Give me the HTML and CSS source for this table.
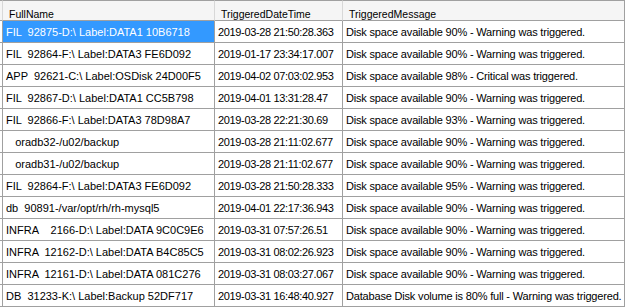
FILE: index.html
```html
<!DOCTYPE html>
<html>
<head>
<meta charset="utf-8">
<link rel="stylesheet" href="styles.css">
</head>
<body>
<div class="grid">
  <div class="row head">
    <div class="strip"></div>
    <div class="cell">FullName</div>
    <div class="cell">TriggeredDateTime</div>
    <div class="cell">TriggeredMessage</div>
  </div>
  <div class="row">
    <div class="strip"></div>
    <div class="cell name selected">FIL  92875-D:\ Label:DATA1 10B6718</div>
    <div class="cell date">2019-03-28 21:50:28.363</div>
    <div class="cell msg">Disk space available 90% - Warning was triggered.</div>
  </div>
  <div class="row">
    <div class="strip"></div>
    <div class="cell name">FIL  92864-F:\ Label:DATA3 FE6D092</div>
    <div class="cell date">2019-01-17 23:34:17.007</div>
    <div class="cell msg">Disk space available 90% - Warning was triggered.</div>
  </div>
  <div class="row">
    <div class="strip"></div>
    <div class="cell name">APP  92621-C:\ Label:OSDisk 24D00F5</div>
    <div class="cell date">2019-04-02 07:03:02.953</div>
    <div class="cell msg">Disk space available 98% - Critical was triggered.</div>
  </div>
  <div class="row">
    <div class="strip"></div>
    <div class="cell name">FIL  92867-D:\ Label:DATA1 CC5B798</div>
    <div class="cell date">2019-04-01 13:31:28.47</div>
    <div class="cell msg">Disk space available 90% - Warning was triggered.</div>
  </div>
  <div class="row">
    <div class="strip"></div>
    <div class="cell name">FIL  92866-F:\ Label:DATA3 78D98A7</div>
    <div class="cell date">2019-03-28 22:21:30.69</div>
    <div class="cell msg">Disk space available 93% - Warning was triggered.</div>
  </div>
  <div class="row">
    <div class="strip"></div>
    <div class="cell name">   oradb32-/u02/backup</div>
    <div class="cell date">2019-03-28 21:11:02.677</div>
    <div class="cell msg">Disk space available 90% - Warning was triggered.</div>
  </div>
  <div class="row">
    <div class="strip"></div>
    <div class="cell name">   oradb31-/u02/backup</div>
    <div class="cell date">2019-03-28 21:11:02.677</div>
    <div class="cell msg">Disk space available 90% - Warning was triggered.</div>
  </div>
  <div class="row">
    <div class="strip"></div>
    <div class="cell name">FIL  92864-F:\ Label:DATA3 FE6D092</div>
    <div class="cell date">2019-03-28 21:50:28.333</div>
    <div class="cell msg">Disk space available 95% - Warning was triggered.</div>
  </div>
  <div class="row">
    <div class="strip"></div>
    <div class="cell name">db  90891-/var/opt/rh/rh-mysql5</div>
    <div class="cell date">2019-04-01 22:17:36.943</div>
    <div class="cell msg">Disk space available 90% - Warning was triggered.</div>
  </div>
  <div class="row">
    <div class="strip"></div>
    <div class="cell name">INFRA    2166-D:\ Label:DATA 9C0C9E6</div>
    <div class="cell date">2019-03-31 07:57:26.51</div>
    <div class="cell msg">Disk space available 90% - Warning was triggered.</div>
  </div>
  <div class="row">
    <div class="strip"></div>
    <div class="cell name">INFRA  12162-D:\ Label:DATA B4C85C5</div>
    <div class="cell date">2019-03-31 08:02:26.923</div>
    <div class="cell msg">Disk space available 90% - Warning was triggered.</div>
  </div>
  <div class="row">
    <div class="strip"></div>
    <div class="cell name">INFRA  12161-D:\ Label:DATA 081C276</div>
    <div class="cell date">2019-03-31 08:03:27.067</div>
    <div class="cell msg">Disk space available 90% - Warning was triggered.</div>
  </div>
  <div class="row">
    <div class="strip"></div>
    <div class="cell name">DB  31233-K:\ Label:Backup 52DF717</div>
    <div class="cell date">2019-03-31 16:48:40.927</div>
    <div class="cell msg">Database Disk volume is 80% full - Warning was triggered.</div>
  </div>
</div>
</body>
</html>
```
FILE: styles.css
```css
html, body {
  margin: 0;
  padding: 0;
  background: #ffffff;
}

body {
  font-family: "Liberation Sans", Arial, sans-serif;
  font-size: 11px;
  color: #000000;
}

.grid {
  display: flex;
  flex-direction: column;
  width: 625px;
}

.row {
  display: grid;
  grid-template-columns: 3px 212px 128px 282px;
  height: 22px;
}

.row > div {
  box-sizing: border-box;
  border-right: 1px solid #a0a0a0;
  border-bottom: 1px solid #a0a0a0;
  overflow: hidden;
  white-space: pre;
  display: flex;
  align-items: center;
}

.cell {
  padding-left: 3px;
  padding-right: 2px;
}

.strip {
  background: #ffffff;
}

.head {
  height: 21px;
}

.head > div {
  border-top: 1px solid #a0a0a0;
  border-right-color: #d8d8d8;
  background: #f5f5f5;
  align-items: flex-end;
  font-size: 10.5px;
}

.head > .cell {
  padding-left: 6px;
}

.head > div:last-child {
  border-right-color: #a0a0a0;
}

.selected {
  background: #3399ff;
  color: #ffffff;
}

.date {
  letter-spacing: -0.35px;
}

.msg {
  letter-spacing: -0.18px;
}
```
